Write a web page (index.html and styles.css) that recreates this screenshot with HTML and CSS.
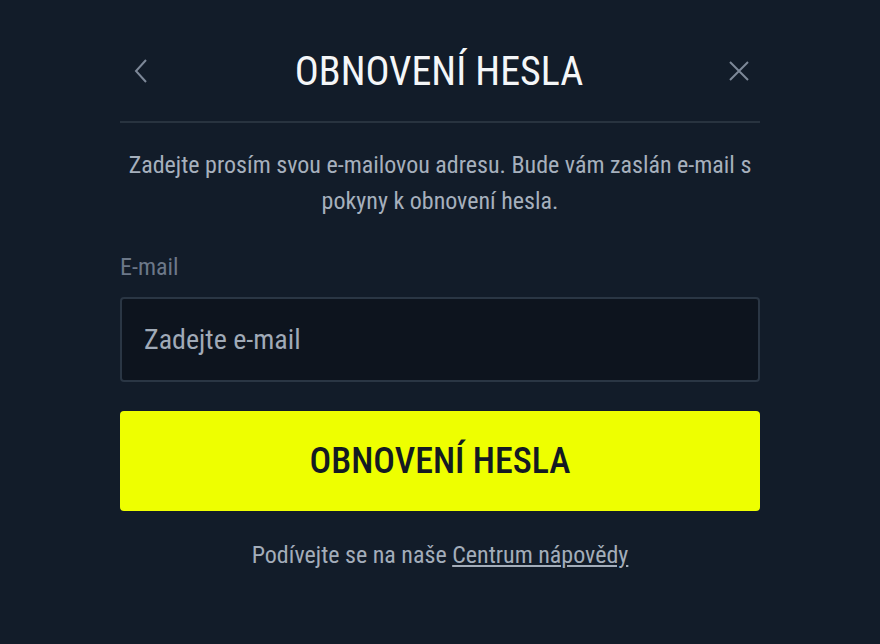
FILE: index.html
```html
<!DOCTYPE html>
<html lang="cs">
<head>
    <meta charset="UTF-8">
    <meta name="viewport" content="width=device-width, initial-scale=1.0">
    <title>Obnovení hesla</title>
    <link rel="stylesheet" href="styles.css">
</head>
<body>

<div class="modal">
    <div class="modal-header">
        <button class="icon-btn" type="button" aria-label="Zpět">
            <svg width="18" height="26" viewBox="0 0 18 26"><path d="M14 2 L4 13 L14 24" fill="none" stroke="#7d8898" stroke-width="2"/></svg>
        </button>
        <h1>OBNOVENÍ HESLA</h1>
        <button class="icon-btn" type="button" aria-label="Zavřít">
            <svg width="22" height="22" viewBox="0 0 22 22"><path d="M2 2 L20 20 M20 2 L2 20" fill="none" stroke="#7d8898" stroke-width="2"/></svg>
        </button>
    </div>

    <p class="intro">Zadejte prosím svou e-mailovou adresu. Bude vám zaslán e-mail s pokyny k obnovení hesla.</p>

    <form class="reset-form">
        <label for="email">E-mail</label>
        <input type="email" id="email" placeholder="Zadejte e-mail">
        <button type="submit" class="submit-btn">OBNOVENÍ HESLA</button>
    </form>

    <p class="help">Podívejte se na naše <a href="#">Centrum nápovědy</a></p>
</div>

</body>
</html>
```

FILE: styles.css
```css
body {
    font-family: "Roboto Condensed", Roboto, "Liberation Sans", sans-serif;
    background-color: #121c29;
    margin: 0;
    padding: 0;
}

.modal {
    width: 640px;
    margin: 0 auto;
    padding-top: 32px;
}

.modal-header {
    display: flex;
    align-items: center;
    justify-content: space-between;
    height: 78px;
    padding: 0 10px 11px 12px;
    border-bottom: 2px solid #28333f;
}

.modal-header h1 {
    margin: 0;
    color: #f4f6f8;
    font-size: 40px;
    font-weight: 400;
}

.icon-btn {
    background: none;
    border: none;
    padding: 0;
    cursor: pointer;
    display: flex;
}

.intro {
    margin: 24px 0 0;
    color: #a6b0bd;
    font-size: 24px;
    line-height: 36px;
    text-align: center;
}

.reset-form {
    display: flex;
    flex-direction: column;
    margin-top: 34px;
}

.reset-form label {
    color: #6c7888;
    font-size: 24px;
    margin-bottom: 16px;
}

.reset-form input {
    height: 85px;
    box-sizing: border-box;
    background-color: #0d141e;
    border: 2px solid #2a3644;
    border-radius: 4px;
    padding: 0 22px;
    font-family: inherit;
    font-size: 28px;
    color: #e0e4ea;
}

.reset-form input::placeholder {
    color: #a0aab7;
}

.submit-btn {
    margin-top: 29px;
    height: 100px;
    background-color: #eeff00;
    color: #141a22;
    border: none;
    border-radius: 4px;
    font-family: inherit;
    font-size: 36px;
    font-weight: 500;
    cursor: pointer;
}

.help {
    margin: 30px 0 0;
    text-align: center;
    color: #a3adba;
    font-size: 24px;
}

.help a {
    color: #a3adba;
}
```
